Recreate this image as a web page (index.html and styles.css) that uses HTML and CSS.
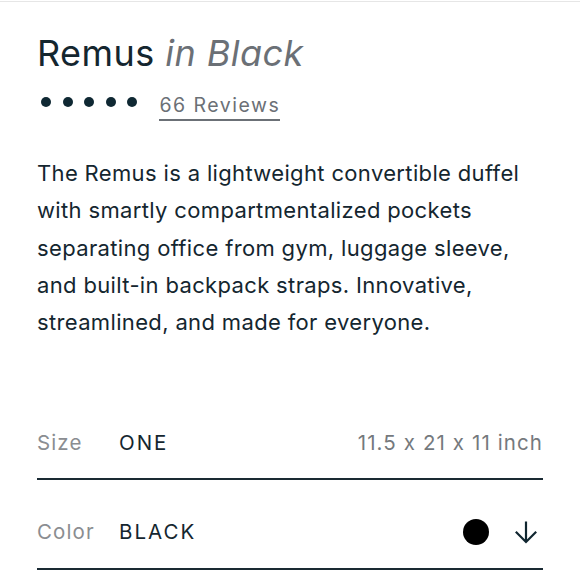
FILE: index.html
```html
<!DOCTYPE html>
<html lang="en">
<head>
<meta charset="utf-8">
<title>Remus in Black</title>
<link rel="stylesheet" href="styles.css">
</head>
<body>
<div class="topline"></div>
<main class="product">
  <h1 class="title">Remus <em class="variant">in Black</em></h1>
  <div class="rating">
    <div class="dots">
      <span class="dot"></span><span class="dot"></span><span class="dot"></span><span class="dot"></span><span class="dot"></span>
    </div>
    <a class="reviews" href="#">66 Reviews</a>
  </div>
  <p class="desc">The Remus is a lightweight convertible duffel with smartly compartmentalized pockets separating office from gym, luggage sleeve, and built-in backpack straps. Innovative, streamlined, and made for everyone.</p>
  <div class="options">
    <div class="row">
      <span class="label">Size</span>
      <span class="value">ONE</span>
      <span class="extra">11.5 x 21 x 11 inch</span>
    </div>
    <div class="row">
      <span class="label">Color</span>
      <span class="value">BLACK</span>
      <span class="swatch"></span>
      <svg class="arrow" width="24" height="24" viewBox="0 0 24 24" aria-hidden="true">
        <path d="M12 1.5 V22 M1.8 11.8 L12 22 L22.2 11.8" fill="none" stroke="#102630" stroke-width="2.2" stroke-linecap="butt" stroke-linejoin="miter"/>
      </svg>
    </div>
  </div>
</main>
</body>
</html>
```

FILE: styles.css
```css
html, body {
  margin: 0;
  padding: 0;
  background: #ffffff;
}

body {
  font-family: "Inter", "Liberation Sans", sans-serif;
  color: #14262f;
}

.topline {
  height: 1px;
  margin-top: 1px;
  background: #e6e6e6;
}

.product {
  padding: 30px 37px 0 37px;
}

.title {
  margin: 0;
  font-size: 36px;
  line-height: 42px;
  font-weight: 400;
  letter-spacing: 0.45px;
  color: #14262f;
}

.variant {
  font-style: italic;
  color: #6b7076;
}

.rating {
  display: flex;
  align-items: flex-start;
  margin-top: 20px;
  gap: 22px;
}

.dots {
  display: flex;
  gap: 11.6px;
  padding-left: 4px;
  margin-top: 3px;
}

.dot {
  width: 10px;
  height: 10px;
  border-radius: 50%;
  background: #0f2833;
}

.reviews {
  display: inline-block;
  font-size: 19.5px;
  line-height: 22px;
  letter-spacing: 1.5px;
  color: #6b7076;
  text-decoration: none;
  padding-bottom: 3px;
  border-bottom: 2px solid #6b7076;
}

.desc {
  margin: 34px 0 0 0;
  font-size: 22px;
  line-height: 37.3px;
  letter-spacing: 0.35px;
  color: #14262f;
}

.options {
  margin-top: 51px;
}

.row {
  display: flex;
  align-items: center;
  padding: 38.5px 0 23.5px 0;
  line-height: 24px;
  font-size: 20.5px;
  border-bottom: 2px solid #1a2a33;
}

.label {
  width: 82px;
  flex: none;
  color: #8a8d91;
  letter-spacing: 1.1px;
}

.value {
  letter-spacing: 2px;
  color: #14262f;
}

.extra {
  margin-left: auto;
  color: #75797d;
  letter-spacing: 1.1px;
}

.swatch {
  margin-left: auto;
  width: 26px;
  height: 26px;
  border-radius: 50%;
  background: #000000;
}

.arrow {
  margin-left: 25px;
  margin-right: 5px;
  display: block;
}
```
